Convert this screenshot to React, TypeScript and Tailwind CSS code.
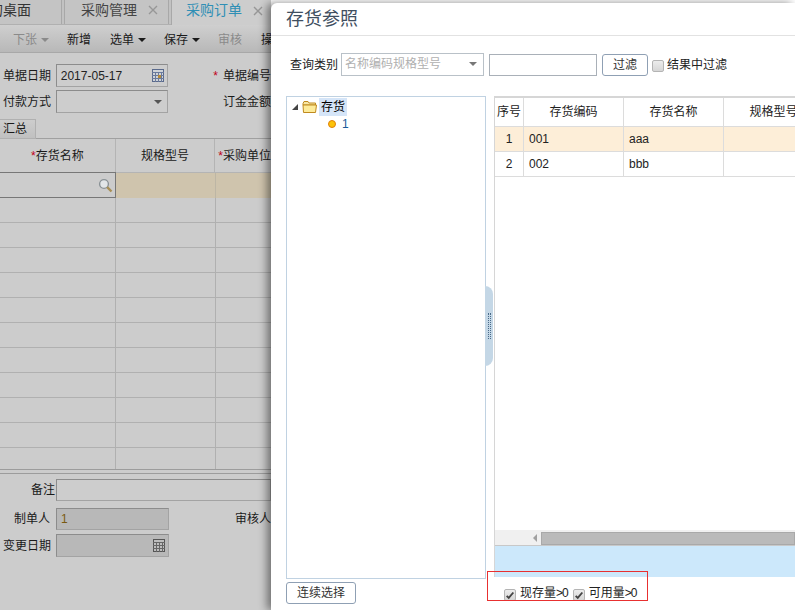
import React from "react";

const font = { fontFamily: '"Liberation Sans", "Noto Sans CJK SC", sans-serif' };

function Caret({ className = "" }: { className?: string }) {
  return <span className={"inline-block w-0 h-0 border-x-[4px] border-x-transparent border-t-[4px] " + className} />;
}

function Calendar({ muted = false }: { muted?: boolean }) {
  return (
    <svg width="12" height="13" viewBox="0 0 12 13" className="shrink-0">
      <rect x="0.5" y="0.5" width="11" height="12" fill={muted ? "#bdbdbd" : "#cfd3d8"} stroke={muted ? "#555" : "#5a6a8c"} />
      <path d="M0 3.5H12M0 6.5H12M0 9.5H12M3.5 3V13M6.5 3V13M9.5 3V13" stroke={muted ? "#666" : "#6a7a9c"} strokeWidth="1" />
      {!muted && <rect x="6" y="6" width="3" height="3" fill="#b58a3a" />}
    </svg>
  );
}

function Field({ label, children, w = "w-[113px]", cls = "bg-[#cdcdcd]", h = "h-[23px]" }: { label?: string; children?: React.ReactNode; w?: string; cls?: string; h?: string }) {
  return (
    <div className={`${w} ${h} ${cls} flex items-center justify-between border border-[#a3a3a3] border-t-[#8c8c8c] border-l-[#8c8c8c] pl-[4px] pr-[3px] text-[12px] text-[#222]`}>
      {label && <span>{label}</span>}
      {children}
    </div>
  );
}

const bgRows = Array.from({ length: 11 });

function Close() {
  return (
    <svg width="10" height="10" viewBox="0 0 10 10" className="shrink-0">
      <path d="M1 1L9 9M9 1L1 9" stroke="#979797" strokeWidth="1.4" />
    </svg>
  );
}

function Background() {
  return (
    <div className="w-[271px] h-[610px] bg-[#cccccc] text-[12px] text-[#1a1a1a]">
      {/* tabs */}
      <div className="flex h-[25px] bg-[#c2c2c2] border-b border-[#b0b0b0] items-stretch">
        <div className="w-[62px] flex items-center pb-[4px] border-r border-[#a8a8a8] text-[14px] text-[#333] whitespace-nowrap overflow-hidden bg-[#c4c4c4]">
          <span className="ml-[-11px]">的桌面</span>
        </div>
        <div className="ml-[2px] w-[105px] flex items-center border-x border-[#a8a8a8] bg-[#c4c4c4] pl-[16px] pb-[4px] gap-[11px] text-[14px] text-[#444]">
          <span>采购管理</span><Close />
        </div>
        <div className="ml-[2px] flex-1 flex items-center border-l border-[#a8a8a8] bg-[#cdcdcd] pl-[14px] pb-[4px] gap-[11px] text-[14px] text-[#2f8fb5] -mb-px">
          <span>采购订单</span><Close />
        </div>
      </div>
      {/* toolbar */}
      <div className="h-[28px] flex items-center pt-[3px] bg-gradient-to-b from-[#cfcfcf] to-[#b8b8b8] border-b border-[#a8a8a8] whitespace-nowrap">
        <span className="ml-[13px] text-[#8a8a8a] flex items-center gap-[4px]">下张<Caret className="border-t-[#8a8a8a]" /></span>
        <span className="ml-[18px]">新增</span>
        <span className="ml-[19px] flex items-center gap-[4px]">选单<Caret className="border-t-[#1a1a1a]" /></span>
        <span className="ml-[18px] flex items-center gap-[4px]">保存<Caret className="border-t-[#1a1a1a]" /></span>
        <span className="ml-[18px] text-[#8a8a8a]">审核</span>
        <span className="ml-[19px]">操作</span>
      </div>
      {/* form */}
      <div className="pt-[11px] flex flex-col gap-[3px]">
        <div className="flex items-center">
          <span className="w-[56px] pl-[3px]">单据日期</span>
          <Field label="2017-05-17" cls="bg-[#cdcdcd]"><Calendar /></Field>
          <span className="ml-[45px] text-[#c00018]">*</span>
          <span className="ml-[5px] whitespace-nowrap">单据编号</span>
        </div>
        <div className="flex items-center">
          <span className="w-[56px] pl-[3px]">付款方式</span>
          <Field><span /><Caret className="border-t-[#555] mr-[2px]" /></Field>
          <span className="ml-[55px] whitespace-nowrap">订金金额</span>
        </div>
      </div>
      {/* sub tab */}
      <div className="mt-[6px] h-[20px] border-b border-[#a0a0a0]">
        <div className="w-[36px] h-[20px] border border-l-0 border-[#b0b0b0] bg-gradient-to-b from-[#cdcdcd] to-[#c0c0c0] pl-[3px] leading-[19px]">汇总</div>
      </div>
      {/* table */}
      <div className="flex h-[34px] border-b border-[#b4b4b4] text-center items-stretch">
        <div className="w-[116px] border-r border-[#b4b4b4] flex items-center justify-center"><span className="text-[#c00018]">*</span>存货名称</div>
        <div className="w-[100px] border-r border-[#b4b4b4] flex items-center justify-center">规格型号</div>
        <div className="flex-1 flex items-center pl-[3px] whitespace-nowrap"><span className="text-[#c00018]">*</span>采购单位</div>
      </div>
      <div className="flex h-[25px] items-stretch">
        <div className="w-[116px] -mt-px border-t border-b border-r border-[#777] flex items-center justify-end pr-[2px]">
          <svg width="15" height="15" viewBox="0 0 15 15">
            <circle cx="6" cy="6" r="4.4" fill="#e2e6e8" stroke="#8a9296" strokeWidth="1.4" />
            <path d="M9.2 9.2L13.5 13.5" stroke="#a88f55" strokeWidth="2.4" />
          </svg>
        </div>
        <div className="w-[100px] bg-[#cfc4ad] border-r border-[#bdb6a5]" />
        <div className="flex-1 bg-[#cfc4ad]" />
      </div>
      {bgRows.map((_, i) => (
        <div key={i} className={`flex items-stretch border-b ${i === 10 ? "h-[22px] border-[#9c9c9c]" : "h-[25px] border-[#b0b0b0]"}`}>
          <div className="w-[116px] border-r border-[#b0b0b0]" />
          <div className="w-[100px] border-r border-[#b0b0b0]" />
          <div className="flex-1" />
        </div>
      ))}
      {/* bottom form */}
      <div className="mt-[3px] border-t border-[#9c9c9c] pt-[5px]">
        <div className="flex items-center">
          <span className="w-[56px] text-right pr-[1px]">备注</span>
          <Field w="flex-1" h="h-[22px]" />
        </div>
        <div className="flex items-center mt-[7px]">
          <span className="w-[56px] text-right pr-[6px]">制单人</span>
          <Field w="w-[113px]" cls="bg-[#b8b8b8]" h="h-[22px]"><span className="text-[#7a5a10]">1</span></Field>
          <span className="ml-[66px] whitespace-nowrap">审核人</span>
        </div>
        <div className="flex items-center mt-[4px]">
          <span className="w-[56px] whitespace-nowrap pl-[3px]">变更日期</span>
          <Field w="w-[113px]" cls="bg-[#b8b8b8]"><span /><Calendar muted /></Field>
        </div>
      </div>
    </div>
  );
}

function Check({ checked = false }: { checked?: boolean }) {
  return (
    <span className="w-[12px] h-[12px] rounded-[2px] border border-[#b4b4b4] bg-gradient-to-b from-[#ececec] to-[#d6d6d6] shrink-0 flex items-center justify-center">
      {checked && (
        <svg width="12" height="12" viewBox="0 0 12 12">
          <path d="M2 7L4.5 9.5L10 3" fill="none" stroke="#444" strokeWidth="2.2" />
        </svg>
      )}
    </span>
  );
}

const cols = ["w-[29px]", "w-[100px]", "w-[100px]", "w-[100px]"];

function RefTable() {
  return (
    <div className="flex-1 flex flex-col min-w-0 h-[481px] border-t-2 border-l border-[#d6d6d6] overflow-hidden">
      <div className="flex h-[29px] border-b border-[#dcdcdc] text-[#222]">
        {["序号", "存货编码", "存货名称", "规格型号"].map((t, i) => (
          <div key={t} className={`${cols[i]} shrink-0 border-r border-[#dcdcdc] flex items-center justify-center whitespace-nowrap`}>{t}</div>
        ))}
      </div>
      {[["1", "001", "aaa"], ["2", "002", "bbb"]].map((r, i) => (
        <div key={r[0]} className={`flex h-[25px] border-b border-[#dcdcdc] ${i === 0 ? "bg-[#fdeed8]" : ""}`}>
          <div className={`${cols[0]} shrink-0 border-r border-[#dcdcdc] flex items-center justify-center`}>{r[0]}</div>
          <div className={`${cols[1]} shrink-0 border-r border-[#dcdcdc] flex items-center pl-[5px]`}>{r[1]}</div>
          <div className={`${cols[2]} shrink-0 border-r border-[#dcdcdc] flex items-center pl-[5px]`}>{r[2]}</div>
          <div className={`${cols[3]} shrink-0`} />
        </div>
      ))}
      <div className="flex-1" />
      <div className="h-[15px] flex bg-[#f0f0f0] items-center">
        <div className="w-[46px] shrink-0 flex justify-end pr-[4px]">
          <span className="w-0 h-0 border-y-[4px] border-y-transparent border-r-[4px] border-r-[#a0a0a0]" />
        </div>
        <div className="flex-1 h-[13px] mt-[2px] bg-[#bababa] border border-[#a9a9a9]" />
      </div>
      <div className="h-[32px] bg-[#cce8fb] border-t border-[#c8c8c8]" />
    </div>
  );
}

function Modal() {
  return (
    <div className="absolute left-[271px] top-[3px] w-[524px] h-[607px] bg-white rounded-tl-[6px] shadow-[-4px_0_8px_rgba(0,0,0,0.45)] text-[12px] text-[#222] flex flex-col">
      <div className="h-[33px] border-b border-[#e2e2e2] pl-[15px] flex items-center text-[18px] text-[#3f4f5f]">存货参照</div>
      <div className="flex items-center h-[23px] mt-[17px] pl-[19px]">
        <span className="w-[51px] whitespace-nowrap">查询类别</span>
        <div className="w-[143px] h-[23px] -mt-[1px] border border-[#b9c1c8] flex items-center justify-between pl-[3px] pr-[6px] text-[#b0b0b0]">
          <span>名称编码规格型号</span><Caret className="border-t-[#777]" />
        </div>
        <div className="ml-[5px] w-[108px] h-[22px] border border-[#a9b0b8]" />
        <button className="ml-[5px] w-[46px] h-[22px] border border-[#8fa0b4] rounded-[3px] text-[#333]">过滤</button>
        <span className="ml-[4px] mt-[3px]"><Check /></span>
        <span className="ml-[3px] whitespace-nowrap">结果中过滤</span>
      </div>
      <div className="flex mt-[20px] pl-[15px] items-start">
        <div className="w-[200px] h-[483px] border border-[#c0d2e2] pt-[1px]">
          <div className="flex items-center h-[17px] pl-[5px]">
            <span className="w-0 h-0 border-l-[6px] border-l-transparent border-b-[6px] border-b-[#444]" />
            <svg width="16" height="14" viewBox="0 0 16 14" className="ml-[4px]">
              <path d="M1 3.5L2 1.5H6L7 3H13.5V5H1Z" fill="#f7e7a6" stroke="#c08a1e" />
              <path d="M1 5H14.5L13.5 12.5H1.5Z" fill="#fdeb9a" stroke="#c08a1e" />
            </svg>
            <span className="ml-[1px] px-[2px] bg-[#d5e5f8] text-black">存货</span>
          </div>
          <div className="flex items-center h-[17px] pl-[41px]">
            <span className="w-[8px] h-[8px] rounded-full bg-[#fcc30a] border border-[#e08008]" />
            <span className="ml-[6px] text-[#1a5a9a]">1</span>
          </div>
        </div>
        <div className="w-[8px] shrink-0 pt-[190px]">
          <div className="-ml-[1px] w-[8px] h-[80px] bg-[#c4d7e6] rounded-r-[8px] flex items-center justify-center">
            <div className="w-[3px] h-[26px] border-x border-dotted border-[#4a6a88]" />
          </div>
        </div>
        <RefTable />
      </div>
      <div className="mt-[3px] pl-[15px] flex items-center">
        <button className="w-[70px] h-[22px] border border-[#8fa0b4] rounded-[3px] text-[#333]">连续选择</button>
        <div className="ml-[148px] flex items-center">
          <span className="mt-[3px]"><Check checked /></span>
          <span className="ml-[4px]">现存量<span className="tracking-[-1px]">&gt;0</span></span>
          <span className="ml-[5px] mt-[3px]"><Check checked /></span>
          <span className="ml-[4px]">可用量<span className="tracking-[-1px]">&gt;0</span></span>
        </div>
      </div>
      <div className="absolute left-[216px] top-[568px] w-[161px] h-[30px] border border-[#e83030] pointer-events-none" />
    </div>
  );
}

export default function App() {
  return (
    <div className="relative w-[795px] h-[610px] overflow-hidden bg-white" style={font}>
      <Background />
      <Modal />
    </div>
  );
}
